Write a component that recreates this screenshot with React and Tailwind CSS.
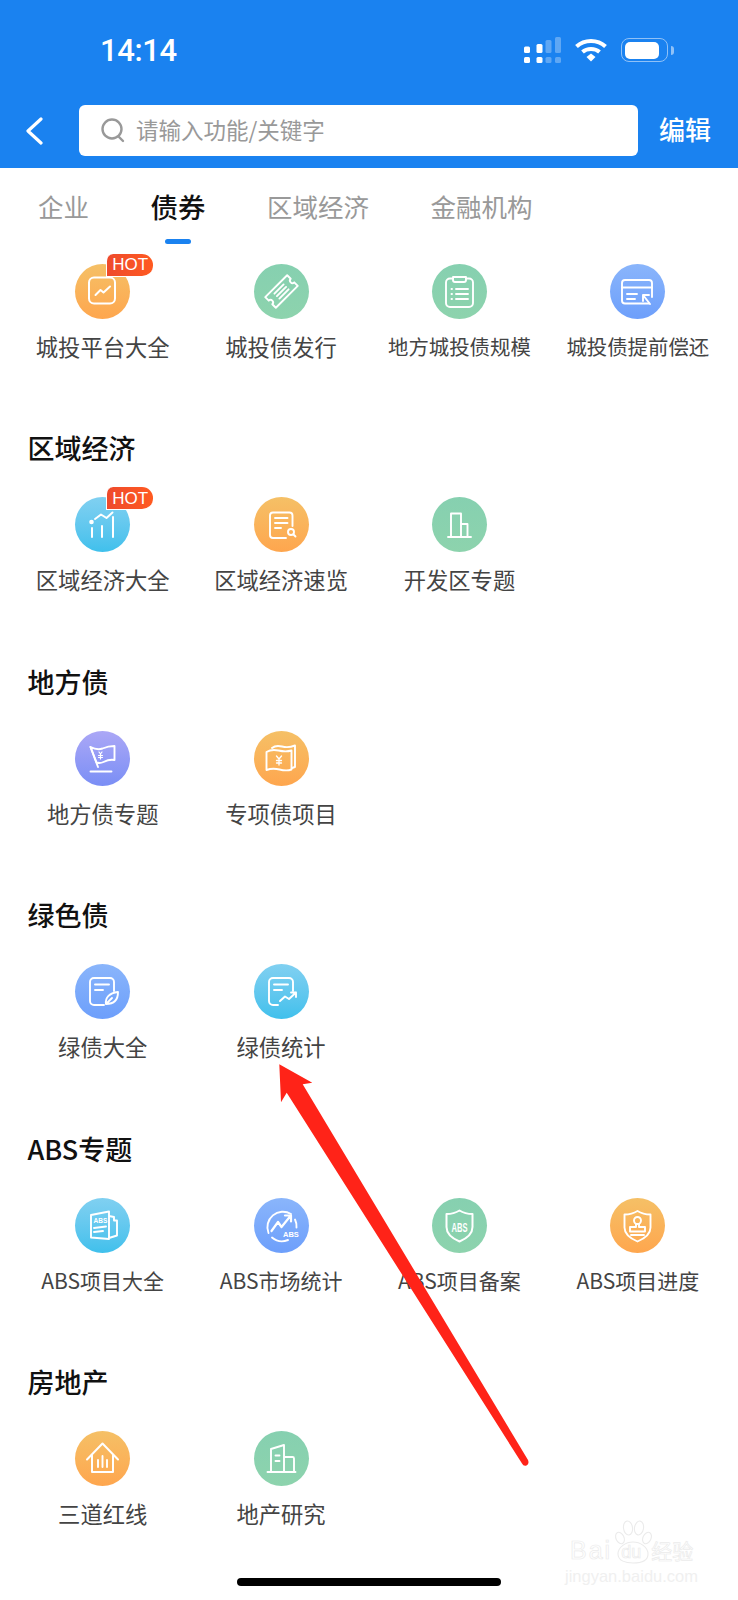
import React from "react";

const S = ({ children, w = 1.9 }) => (
  <svg viewBox="0 0 55 55" className="w-[55px] h-[55px]" fill="none" stroke="#fff" strokeWidth={w} strokeLinecap="round" strokeLinejoin="round">
    {children}
  </svg>
);

const Chart = () => (
  <S w={2}>
    <rect x="14" y="13.500" width="26" height="26" rx="5" />
    <path d="M20.500 31l5-5 3 2.500 6.500-6" />
  </S>
);
const Ticket = () => (
  <S>
    <g transform="rotate(-45 27.500 27.500)">
      <path d="M12 20h31v5a2.500 2.500 0 0 0 0 5v5H12v-5a2.500 2.500 0 0 0 0-5z" />
      <path d="M21 24h13M21 27.500h13M21 31h13" />
    </g>
  </S>
);
const Clip = () => (
  <S>
    <path d="M21 14.500h-3a4 4 0 0 0-4 4V39a4 4 0 0 0 4 4h19a4 4 0 0 0 4-4V18.500a4 4 0 0 0-4-4h-3" />
    <path d="M21 13h13v3a2 2 0 0 1-2 2H23a2 2 0 0 1-2-2z" />
    <path d="M19.500 25h.5M19.500 30h.5M19.500 35h.5M24 25h12M24 30h12M24 35h12" />
  </S>
);
const Card = () => (
  <S>
    <path d="M39 39.500H15a3 3 0 0 1-3-3V19a3 3 0 0 1 3-3h24a3 3 0 0 1 3 3v14" />
    <path d="M12 23.500h30M17 30h10M17 35h8" />
    <path d="M33 31l7 9M33 31v6M33 31h6" />
  </S>
);
const Bars = () => (
  <S w={2}>
    <path d="M17 31v9M27 29v11M38 20v20" />
    <path d="M20 22l6-4.500 5.500 3.500 6-5.500" />
    <circle cx="16.500" cy="25" r="1.300" fill="#fff" />
  </S>
);
const DocSearch = () => (
  <S>
    <path d="M32 41H19a3 3 0 0 1-3-3V18.500a3 3 0 0 1 3-3h16.500a3 3 0 0 1 3 3V29" />
    <path d="M21 21h12.500M21 26h12.500M21 31h6" />
    <circle cx="37" cy="35" r="3" />
    <path d="M39.500 37.500l2 2" />
  </S>
);
const Building = () => (
  <S>
    <path d="M19 40V16.500h10V40M29 27h6.500v13M16 40h23" />
  </S>
);
const Flag = () => (
  <S>
    <path d="M15.500 16c5 2.500 8 3 12 1.500 4.500-2 8-2.500 12-2.500v14c-5-1-8 .5-11 2-2.500 1.200-5 1.200-7 .5z" />
    <path d="M15.500 16L23 36M15.500 40.500h21" />
    <path d="M24 21l1.500 2 1.500-2M25.500 23v5M23.500 24.500h4M23.500 26.500h4" strokeWidth="1.200" />
  </S>
);
const Money = () => (
  <S>
    <path d="M18 17c3-2.500 6-2.500 10-1.500s8 1 13-1v21.500l-3 1" />
    <path d="M12.500 21c4-2.500 7.500-2.500 12-1.500s8 1.500 13 0v19c-4 1.500-8 1-12 0s-9-1-13 .5z" />
    <path d="M22.500 25l2.500 3 2.500-3M25 28v6M22.500 29.500h5M22.500 32h5" strokeWidth="1.300" />
  </S>
);
const DocLeaf = () => (
  <S>
    <path d="M29 41H19a4 4 0 0 1-4-4V18a4 4 0 0 1 4-4h16a4 4 0 0 1 4 4v9" />
    <path d="M20 20.500h14M20 26h8" />
    <path d="M31 40c-1-6 3-11 12-12 0 7-3.500 12-12 12zM31 40l6-6" />
  </S>
);
const DocTrend = () => (
  <S>
    <path d="M24 41h-5a4 4 0 0 1-4-4V18a4 4 0 0 1 4-4h16a4 4 0 0 1 4 4v9" />
    <path d="M20 20.500h14M20 26h8" />
    <path d="M26 37l5-4.500 4 2.500 7-6.500M37 28.500h5v4.500" />
  </S>
);
const AbsBook = () => (
  <S>
    <path d="M16 17l18-3.500V41l-18-1.500zM34 18l5 1v3.500h3v15l-8 2.500" />
    <path d="M19 30l12-1.500M19 34l9-1" />
    <text x="18.500" y="25" fontSize="6.500" fontWeight="700" fill="#fff" stroke="none" fontFamily="'Liberation Sans',sans-serif">ABS</text>
  </S>
);
const AbsMarket = () => (
  <S>
    <path d="M37 16a15.500 15.500 0 0 0-22.500 19" />
    <path d="M18 39.500a15.500 15.500 0 0 0 16 2.500" />
    <path d="M41 21.500a15 15 0 0 1 1.500 8" />
    <path d="M17.500 33l6.500-9 3.500 5 8.500-10.500M31 17.500h6v6" strokeWidth="2.200" />
    <text x="29" y="39" fontSize="7.500" fontWeight="700" fill="#fff" stroke="none" fontFamily="'Liberation Sans',sans-serif">ABS</text>
  </S>
);
const ShieldAbs = () => (
  <S w={2}>
    <path d="M27.500 12.500c4 2.500 8.500 3.500 13 3.500v13c0 7-6 11.500-13 14.500-7-3-13-7.500-13-14.500V16c4.500 0 9-1 13-3.500z" />
    <text x="27.500" y="33.500" textAnchor="middle" fontSize="12" fontWeight="700" fill="#fff" stroke="none" fontFamily="'Liberation Sans',sans-serif" textLength="16" lengthAdjust="spacingAndGlyphs">ABS</text>
  </S>
);
const ShieldStamp = () => (
  <S>
    <path d="M27.500 13c4 2.500 8.500 3.500 13 3.500v13c0 7-6 11-13 14-7-3-13-7-13-14v-13c4.500 0 9-1 13-3.500z" />
    <circle cx="27.500" cy="22.500" r="3.500" />
    <path d="M26 26v3h-6v4.500h15V29h-6v-3M21 37h13" />
  </S>
);
const House = () => (
  <S>
    <path d="M12 28.500L27.500 12.500 43 28.500" strokeWidth="2" />
    <path d="M17 24.500V41h21V24.500" strokeWidth="2" />
    <path d="M23 29v7M27.500 25v11M32 29v7" />
  </S>
);
const Tower = () => (
  <S>
    <path d="M17 41V18l13-4v27M30 26h8.500a1.500 1.500 0 0 1 1.500 1.500V41M13.500 41h28" />
    <path d="M21.500 24.500h4M21.500 30h4" />
  </S>
);

const tones = {
  orange: "bg-linear-to-b from-[#f5c066] to-[#fea64e]",
  green: "bg-linear-to-b from-[#86d0b0] to-[#8dd3ad]",
  blue: "bg-linear-to-b from-[#8ab5fb] to-[#6d9ffb]",
  sky: "bg-linear-to-b from-[#80d0f1] to-[#3fc0ec]",
  purple: "bg-linear-to-b from-[#aba7f6] to-[#7a8ef5]",
};

const sizes = {
  normal: "text-[22.300px]",
  long: "text-[20.400px]",
  abs: "text-[21px]",
};

const Item = ({ label, tone, Icon, hot, size = "normal" }) => (
  <div className="flex flex-col items-center">
    <div className={`relative w-[55px] h-[55px] rounded-full ${tones[tone]}`}>
      <Icon />
      {hot && (
        <span className="absolute left-[31px] top-[-10px] w-[47px] h-[22.500px] flex items-center justify-center rounded-tl-[7px] rounded-tr-[11px] rounded-br-[11px] border-l border-b border-white bg-linear-to-r from-[#ee4a2c] to-[#ff5a20] text-white text-[17px] leading-none font-['Liberation_Sans',sans-serif]">
          HOT
        </span>
      )}
    </div>
    <div className={`mt-[12px] h-[30px] leading-[30px] text-[#444] whitespace-nowrap ${sizes[size]}`}>{label}</div>
  </div>
);

const Row = ({ items }) => (
  <div className="grid grid-cols-4 pl-[13.500px] pr-[11px]">
    {items.map((it) => (
      <Item key={it.label} {...it} />
    ))}
  </div>
);

const Section = ({ title, items }) => (
  <section className="pt-[69.400px]">
    <h2 className="pl-[27.500px] h-[36px] leading-[36px] text-[27px] font-medium text-[#111] mb-[31px]">{title}</h2>
    <Row items={items} />
  </section>
);

const sections = [
  {
    title: "区域经济",
    items: [
      { label: "区域经济大全", tone: "sky", Icon: Bars, hot: true },
      { label: "区域经济速览", tone: "orange", Icon: DocSearch },
      { label: "开发区专题", tone: "green", Icon: Building },
    ],
  },
  {
    title: "地方债",
    items: [
      { label: "地方债专题", tone: "purple", Icon: Flag },
      { label: "专项债项目", tone: "orange", Icon: Money },
    ],
  },
  {
    title: "绿色债",
    items: [
      { label: "绿债大全", tone: "blue", Icon: DocLeaf },
      { label: "绿债统计", tone: "sky", Icon: DocTrend },
    ],
  },
  {
    title: "ABS专题",
    items: [
      { label: "ABS项目大全", tone: "sky", Icon: AbsBook, size: "abs" },
      { label: "ABS市场统计", tone: "blue", Icon: AbsMarket, size: "abs" },
      { label: "ABS项目备案", tone: "green", Icon: ShieldAbs, size: "abs" },
      { label: "ABS项目进度", tone: "orange", Icon: ShieldStamp, size: "abs" },
    ],
  },
  {
    title: "房地产",
    items: [
      { label: "三道红线", tone: "orange", Icon: House },
      { label: "地产研究", tone: "green", Icon: Tower },
    ],
  },
];

const first = [
  { label: "城投平台大全", tone: "orange", Icon: Chart, hot: true },
  { label: "城投债发行", tone: "green", Icon: Ticket },
  { label: "地方城投债规模", tone: "green", Icon: Clip, size: "long" },
  { label: "城投债提前偿还", tone: "blue", Icon: Card, size: "long" },
];

const Signal = () => (
  <svg width="37" height="26" viewBox="0 0 37 26" fill="#fff">
    <rect x="0" y="9.500" width="6" height="6.500" rx="1.500" />
    <rect x="0" y="20" width="6" height="6" rx="1.500" />
    <rect x="12.500" y="7" width="6" height="9" rx="1.500" />
    <rect x="12.500" y="20" width="6" height="6" rx="1.500" />
    <rect x="21.500" y="3" width="6" height="13" rx="1.500" fillOpacity=".3" />
    <rect x="21.500" y="20" width="6" height="6" rx="1.500" fillOpacity=".3" />
    <rect x="31" y="0" width="6" height="16" rx="1.500" fillOpacity=".3" />
    <rect x="31" y="20" width="6" height="6" rx="1.500" fillOpacity=".3" />
  </svg>
);

const Wifi = () => (
  <svg width="32" height="24" viewBox="0 0 32 24" fill="none" stroke="#fff" strokeWidth="4">
    <path d="M1.500 8.500C9.500 1 22.500 1 30.500 8.500" />
    <path d="M7.500 14c4.500-4 12.500-4 17 0" />
    <path d="M11.500 19l4.500-3.500 4.500 3.500-4.500 4.500z" fill="#fff" stroke="none" />
  </svg>
);

const Battery = () => (
  <div className="flex items-center gap-[3px]">
    <div className="w-[47px] h-[24px] rounded-[8px] border-[1.500px] border-[#8fc1f7] p-[2.500px] flex">
      <div className="w-[34px] h-full bg-white rounded-[5px]" />
    </div>
    <div className="w-[3px] h-[9px] rounded-r-full bg-[#8fc1f7]" />
  </div>
);

export default function App() {
  return (
    <div className="relative w-[738px] h-[1600px] overflow-hidden bg-white flex flex-col font-['Noto_Sans_CJK_SC','Liberation_Sans',sans-serif]">
      <header className="h-[168px] bg-[#1a82f0] shrink-0">
        <div className="h-[100px] pl-[100px] pr-[64px] flex items-center justify-between">
          <span className="mt-[3px] text-white text-[31px] font-medium tracking-[-0.400px] font-['Roboto',sans-serif]">14:14</span>
          <div className="flex items-center gap-[14px]">
            <Signal />
            <Wifi />
            <Battery />
          </div>
        </div>
        <div className="mt-[5px] flex items-center">
          <svg width="18" height="28" viewBox="0 0 18 28" fill="none" stroke="#fff" strokeWidth="3.200" strokeLinecap="round" strokeLinejoin="round" className="ml-[25px]">
            <path d="M16 2L3 14l13 12" />
          </svg>
          <div className="ml-[36px] w-[559px] h-[51px] rounded-[6px] bg-white flex items-center pl-[22px]">
            <svg width="25" height="25" viewBox="0 0 25 25" fill="none" stroke="#999" strokeWidth="2.400" strokeLinecap="round">
              <circle cx="11" cy="11" r="9.500" />
              <path d="M18 19l4 4" />
            </svg>
            <span className="ml-[10px] mb-[4px] text-[22.500px] leading-[30px] text-[#999]">请输入功能/关键字</span>
          </div>
          <span className="ml-[21px] mb-[4px] text-white text-[26px] leading-[30px] font-medium">编辑</span>
        </div>
      </header>

      <nav className="h-[76px] shrink-0 pl-[38px] flex items-start gap-[61.500px] text-[25.500px] text-[#999]">
        <span className="mt-[20px] leading-[36px]">企业</span>
        <div className="flex flex-col items-center mt-[20px]">
          <span className="leading-[36px] text-[27.500px] font-medium text-[#111]">债券</span>
          <span className="mt-[15px] w-[26px] h-[5px] rounded-full bg-[#1a82f0]" />
        </div>
        <span className="mt-[20px] leading-[36px]">区域经济</span>
        <span className="mt-[20px] leading-[36px]">金融机构</span>
      </nav>

      <main className="pt-[20px]">
        <Row items={first} />
        {sections.map((s) => (
          <Section key={s.title} {...s} />
        ))}
      </main>

      <div className="mt-auto mb-[14px] self-center w-[264px] h-[8px] rounded-full bg-black" />

      <svg className="absolute left-0 top-0 pointer-events-none" width="738" height="1600" viewBox="0 0 738 1600">
        <path d="M279.300 1064.300L312.300 1082.700L302.700 1084.300L528 1460Q529.500 1464 526.500 1465.500Q523.500 1466.500 522 1463.500L286.700 1092.700L281 1102.300Z" fill="#ff2318" />
      </svg>

      <div className="absolute left-[565px] top-[1520px] w-[135px]">
        <svg width="38" height="44" viewBox="0 0 38 44" className="absolute left-[49px] top-0" fill="none" stroke="#ebebeb" strokeWidth="1.100">
          <ellipse cx="6" cy="18" rx="4" ry="6" transform="rotate(-25 6 18)" />
          <ellipse cx="14" cy="8" rx="4.500" ry="7" transform="rotate(-8 14 8)" />
          <ellipse cx="25" cy="8" rx="4.500" ry="7" transform="rotate(10 25 8)" />
          <ellipse cx="33" cy="18" rx="4" ry="6" transform="rotate(25 33 18)" />
          <path d="M4 34c0-7 8-12 15-12s15 5 15 12c0 7-8 9-15 9s-15-2-15-9z" />
        </svg>
        <div className="flex items-end h-[43px] pl-[5px] font-['Liberation_Sans',sans-serif]">
          <span className="text-[25px] leading-[26px] tracking-[2px] text-transparent [-webkit-text-stroke:0.700px_#ebebeb]">Bai</span>
          <span className="ml-[9px] text-[18px] leading-[22px] text-transparent [-webkit-text-stroke:0.700px_#ebebeb]">du</span>
          <span className="ml-[10px] text-[21px] leading-[26px] text-transparent [-webkit-text-stroke:0.700px_#ebebeb] font-['Noto_Sans_CJK_SC',sans-serif]">经验</span>
        </div>
        <div className="mt-[3px] text-[16.500px] leading-[20px] text-[#f0f0f0] whitespace-nowrap font-['Liberation_Sans',sans-serif]">jingyan.baidu.com</div>
      </div>
    </div>
  );
}
